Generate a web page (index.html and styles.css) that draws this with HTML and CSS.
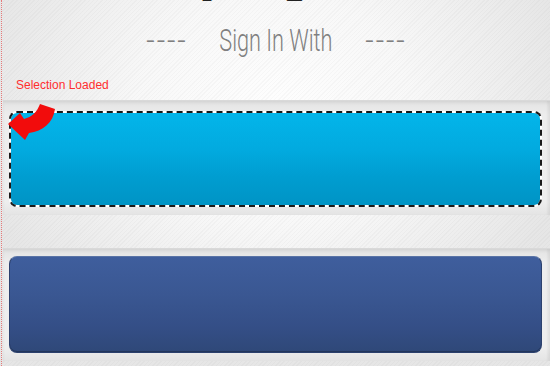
FILE: index.html
```html
<!DOCTYPE html>
<html lang="en">
<head>
<meta charset="utf-8">
<title>Sign In With</title>
<link rel="stylesheet" href="styles.css">
</head>
<body>
<div class="page">
  <h1 class="title">Easy Login</h1>
  <div class="divider">
    <span class="dashes">----</span>
    <span class="divider-text"><span class="squeeze">Sign In With</span></span>
    <span class="dashes">----</span>
  </div>
  <p class="status">Selection Loaded</p>
  <div class="panel">
    <svg class="arrow" width="60" height="42" viewBox="0 0 60 42" aria-hidden="true">
      <path d="M37 3 L52 8 C50 22 40 30 26 32 L22 39 L5 23 L17 12 L21 18 C29 16 34 11 37 3 Z" fill="#f20c0c"/>
    </svg>
    <div class="btn btn-twitter"></div>
  </div>
  <div class="gap"></div>
  <div class="panel">
    <div class="btn btn-facebook"></div>
  </div>
</div>
</body>
</html>
```

FILE: styles.css
```css
html {
  margin: 0;
  height: 100%;
  background:
    repeating-linear-gradient(135deg, rgba(0,0,0,0.025) 0 1px, rgba(255,255,255,0) 1px 3px),
    radial-gradient(ellipse 55% 70% at 50% 30%, #fefefe 0%, #f8f8f8 45%, #e6e6e6 100%);
  background-color: #eeeeee;
}

body {
  margin: 0 0 0 1px;
  border-left: 1px dotted #e77a7a;
  min-height: 100vh;
  overflow: hidden;
  font-family: "Liberation Sans", Arial, sans-serif;
}

.page {
  display: flex;
  flex-direction: column;
}

.title {
  margin: -39px 0 0 0;
  height: 40px;
  line-height: 40px;
  font-size: 40px;
  font-weight: bold;
  color: #222;
  text-align: center;
  padding-right: 80px;
  white-space: nowrap;
  overflow: hidden;
}

.divider {
  display: flex;
  justify-content: center;
  align-items: center;
  gap: 35px;
  padding-top: 24px;
  height: 31px;
  font-family: Roboto, "Liberation Sans", sans-serif;
  font-weight: 300;
  font-size: 31px;
  line-height: 31px;
  color: #7f7f7f;
}

.dashes {
  width: 36px;
  display: flex;
  justify-content: center;
  letter-spacing: 2px;
  transform: scaleX(0.95);
  white-space: nowrap;
}

.divider-text {
  width: 113px;
  display: flex;
  justify-content: center;
  white-space: nowrap;
}

.squeeze {
  display: inline-block;
  transform: scaleX(0.7);
}

.status {
  margin: 21px 0 7px 0;
  padding-left: 14px;
  font-size: 12px;
  line-height: 16px;
  color: #ff2e2e;
}

.panel {
  position: relative;
  margin-left: 1px;
  padding: 10px 8px 8px 6px;
  background: linear-gradient(#e3e3e3, #ededed 12%, #eeeeee 88%, #e4e4e4);
  border-top: 1px solid #d9d9d9;
  box-shadow: inset 0 2px 3px rgba(0,0,0,0.06), inset -3px 0 2px rgba(0,0,0,0.04);
}

.panel + .gap + .panel {
  padding-top: 7px;
}

.arrow {
  position: absolute;
  left: 0;
  top: 0;
  z-index: 2;
}

.btn {
  border-radius: 8px;
}

.btn-twitter {
  height: 92px;
  border: 2px dashed #1a1a1a;
  background:
    linear-gradient(#03b5ea 0%, #02aadf 40%, #009dd0 70%, #0094c5 100%) padding-box,
    #ffffff border-box;
}

.btn-facebook {
  height: 95px;
  border: 1px solid #2c416e;
  border-top-color: #5a74a6;
  background: linear-gradient(#3f5e9d 0%, #3a5792 40%, #344e86 75%, #2f4878 100%);
  box-shadow: inset 0 -1px 0 #24375c;
}

.gap {
  height: 33px;
}
```
